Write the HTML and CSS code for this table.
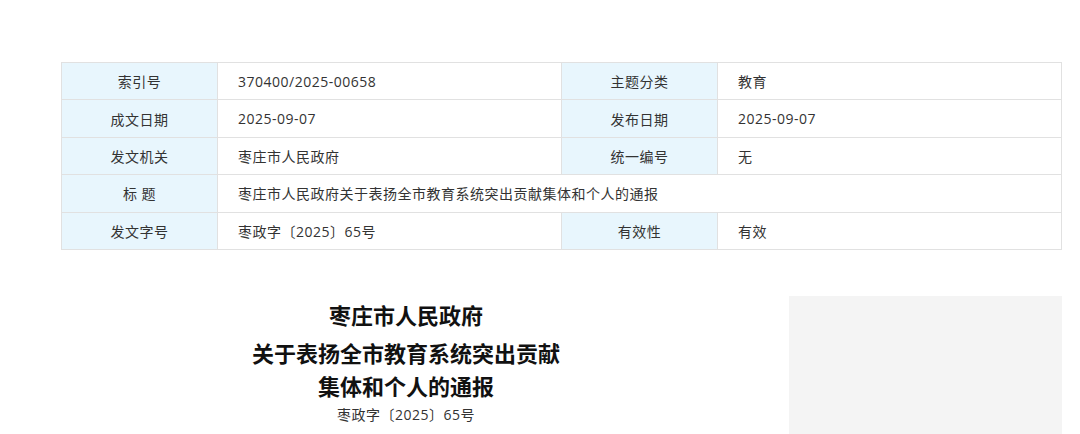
FILE: index.html
```html
<!DOCTYPE html>
<html lang="zh-CN">
    <head>
        <meta charset="UTF-8">
        <meta name="viewport" content="width=device-width, initial-scale=1.0">
        <title>枣庄市人民政府关于表扬全市教育系统突出贡献集体和个人的通报</title>
        <link rel="stylesheet" href="styles.css">
    </head>
    <body>
        <div class="wrap">
            <table class="info-table">
                <tr>
                    <td class="label">索引号</td>
                    <td class="value">370400/2025-00658</td>
                    <td class="label">主题分类</td>
                    <td class="value">教育</td>
                </tr>
                <tr>
                    <td class="label">成文日期</td>
                    <td class="value">2025-09-07</td>
                    <td class="label">发布日期</td>
                    <td class="value">2025-09-07</td>
                </tr>
                <tr>
                    <td class="label">发文机关</td>
                    <td class="value">枣庄市人民政府</td>
                    <td class="label">统一编号</td>
                    <td class="value">无</td>
                </tr>
                <tr>
                    <td class="label">标 题</td>
                    <td class="value" colspan="3">枣庄市人民政府关于表扬全市教育系统突出贡献集体和个人的通报</td>
                </tr>
                <tr>
                    <td class="label">发文字号</td>
                    <td class="value">枣政字〔2025〕65号</td>
                    <td class="label">有效性</td>
                    <td class="value">有效</td>
                </tr>
            </table>

            <div class="article">
                <div class="article-main">
                    <h1 class="doc-org">枣庄市人民政府</h1>
                    <h2 class="doc-title">关于表扬全市教育系统突出贡献<br>集体和个人的通报</h2>
                    <p class="doc-no">枣政字〔2025〕65号</p>
                </div>
                <div class="article-side"></div>
            </div>
        </div>
    </body>
</html>
```

FILE: styles.css
```css
body {
    font-family: "Open Sans", "Noto Sans CJK SC", sans-serif;
    margin: 0;
    padding: 0;
    color: #333;
    background: #fff;
}

.wrap {
    width: 1001px;
    margin-left: 61px;
    padding-top: 62px;
}

/* info table at the top */
.info-table {
    width: 100%;
    border-collapse: collapse;
    table-layout: fixed;
    font-size: 14px;
    letter-spacing: 0.5px;
}

.info-table td {
    border: 1px solid #e1e1e1;
    height: 36.4px;
    padding: 0;
}

.info-table .label {
    width: 155px;
    background-color: #e8f6fd;
    text-align: center;
}

.info-table .value {
    padding-left: 20px;
}

/* article body */
.article {
    display: flex;
    gap: 38px;
    margin-top: 46px;
}

.article-main {
    flex: 1;
    text-align: center;
    color: #111;
    font-family: "Noto Sans CJK SC", sans-serif;
}

.article-side {
    width: 273px;
    height: 200px;
    background-color: #f4f4f4;
}

.doc-org {
    font-size: 22px;
    font-weight: bold;
    line-height: 30px;
    margin: 3px 0 0;
}

.doc-title {
    font-size: 22px;
    font-weight: bold;
    line-height: 33px;
    margin: 7px 0 0;
}

.doc-no {
    font-family: "Open Sans", "Noto Sans CJK SC", sans-serif;
    font-size: 14px;
    letter-spacing: 0.5px;
    color: #333;
    line-height: 20px;
    margin: 3px 0 0;
}
```
